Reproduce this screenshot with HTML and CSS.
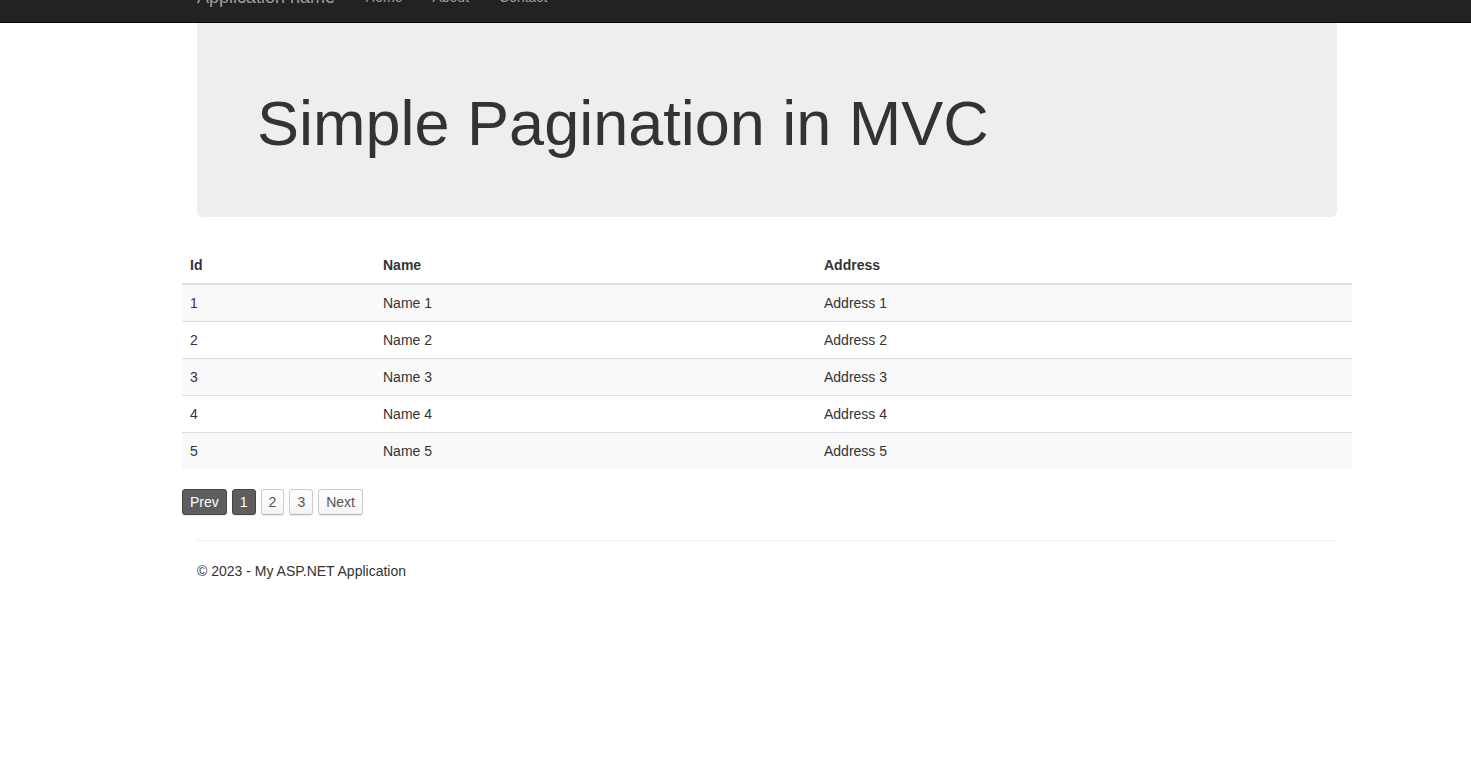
FILE: index.html
```html
<!DOCTYPE html>
<html lang="en">
<head>
  <meta charset="UTF-8" />
  <meta name="viewport" content="width=device-width, initial-scale=1.0"/>
  <title>Simple Pagination in MVC</title>
  <link rel="stylesheet" href="styles.css">
</head>
<body>
  <div class="navbar">
    <div class="container">
      <a class="navbar-brand" href="#">Application name</a>
      <ul class="nav">
        <li><a href="#">Home</a></li>
        <li><a href="#">About</a></li>
        <li><a href="#">Contact</a></li>
      </ul>
    </div>
  </div>

  <div class="container body-content">
    <div class="jumbotron">
      <h1>Simple Pagination in MVC</h1>
    </div>
  </div>

  <div class="container">
    <table class="table">
      <thead>
        <tr>
          <th class="col-id">Id</th>
          <th class="col-name">Name</th>
          <th>Address</th>
        </tr>
      </thead>
      <tbody>
        <tr><td>1</td><td>Name 1</td><td>Address 1</td></tr>
        <tr><td>2</td><td>Name 2</td><td>Address 2</td></tr>
        <tr><td>3</td><td>Name 3</td><td>Address 3</td></tr>
        <tr><td>4</td><td>Name 4</td><td>Address 4</td></tr>
        <tr><td>5</td><td>Name 5</td><td>Address 5</td></tr>
      </tbody>
    </table>

    <div class="pager">
      <a class="page-btn dark" href="#">Prev</a>
      <a class="page-btn dark" href="#">1</a>
      <a class="page-btn" href="#">2</a>
      <a class="page-btn" href="#">3</a>
      <a class="page-btn" href="#">Next</a>
    </div>
  </div>

  <div class="container body-content">
    <hr />
    <footer>
      <p>&copy; 2023 - My ASP.NET Application</p>
    </footer>
  </div>
</body>
</html>
```

FILE: styles.css
```css
/* Base */
body {
  margin: 0;
  font-family: "Liberation Sans", Arial, sans-serif;
  font-size: 14px;
  line-height: 20px;
  color: #333;
  background: #fff;
}

a {
  text-decoration: none;
}

.container {
  width: 1170px;
  margin-left: 182px;
  box-sizing: border-box;
}

.body-content {
  padding: 0 15px;
}

/* Navbar */
.navbar {
  height: 50px;
  margin-top: -28px;
  background: #222;
  border-bottom: 1px solid #080808;
  position: relative;
  z-index: 2;
}

.navbar .container {
  display: flex;
}

.navbar-brand {
  padding: 15px;
  font-size: 18px;
  line-height: 20px;
  color: #9d9d9d;
}

.nav {
  display: flex;
  margin: 0;
  padding: 0;
  list-style: none;
}

.nav a {
  display: block;
  padding: 15px;
  color: #9d9d9d;
}

/* Jumbotron */
.jumbotron {
  padding: 48px 60px 49px;
  margin-bottom: 30px;
  background: #eee;
  border-radius: 0 0 6px 6px;
}

.jumbotron h1 {
  margin: 18px 0 10px;
  font-size: 63px;
  font-weight: 500;
  line-height: 1.1;
  color: #333;
}

/* Table */
.table {
  width: 100%;
  border-collapse: collapse;
  margin-bottom: 20px;
}

.table th,
.table td {
  padding: 8px;
  text-align: left;
  vertical-align: top;
}

.table th {
  font-weight: bold;
  border-bottom: 2px solid #ddd;
}

.table td {
  border-top: 1px solid #ddd;
}

.table thead + tbody tr:first-child td {
  border-top: 0;
}

.table tbody tr:nth-child(odd) {
  background: #f9f9f9;
}

.col-id {
  width: 177px;
}

.col-name {
  width: 425px;
}

/* Pagination */
.pager {
  display: flex;
  gap: 5px;
}

.page-btn {
  display: block;
  padding: 2px 7px;
  border: 1px solid #ccc;
  border-bottom-color: #b8b8b8;
  border-radius: 3px;
  background: linear-gradient(#fff, #f4f4f4);
  color: #555;
  box-shadow: 0 1px 1px rgba(0,0,0,0.08);
}

.page-btn.dark {
  background: #5e5e5e;
  border-color: #444;
  color: #fff;
}

/* Footer */
hr {
  margin: 25px 0 20px;
  border: 0;
  border-top: 1px solid #eee;
}

footer p {
  margin: 0 0 10px;
}
```
